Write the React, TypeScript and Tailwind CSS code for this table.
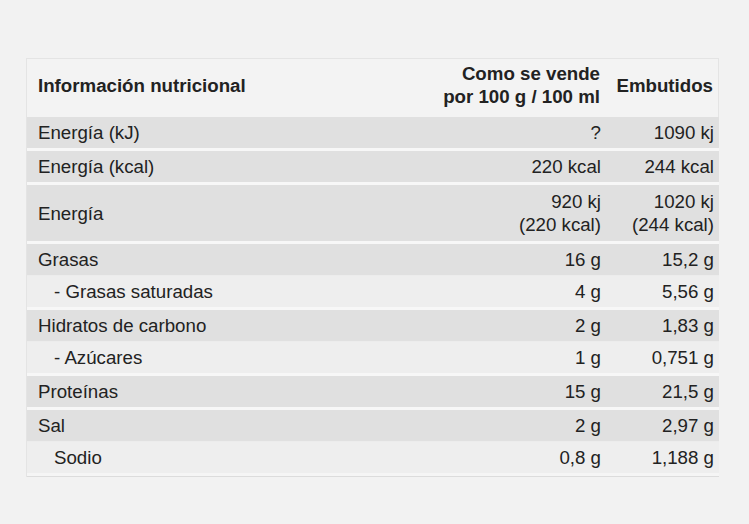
import React from "react";

type Row = { label: string; a: React.ReactNode; b: React.ReactNode; sub?: boolean; tall?: boolean; sepAfter?: boolean };

const rows: Row[] = [
  { label: "Energía (kJ)", a: "?", b: "1090 kj", sepAfter: true },
  { label: "Energía (kcal)", a: "220 kcal", b: "244 kcal", sepAfter: true },
  {
    label: "Energía",
    a: (
      <>
        920 kj
        <br />
        (220 kcal)
      </>
    ),
    b: (
      <>
        1020 kj
        <br />
        (244 kcal)
      </>
    ),
    tall: true,
    sepAfter: true,
  },
  { label: "Grasas", a: "16 g", b: "15,2 g" },
  { label: "- Grasas saturadas", a: "4 g", b: "5,56 g", sub: true, sepAfter: true },
  { label: "Hidratos de carbono", a: "2 g", b: "1,83 g" },
  { label: "- Azúcares", a: "1 g", b: "0,751 g", sub: true, sepAfter: true },
  { label: "Proteínas", a: "15 g", b: "21,5 g", sepAfter: true },
  { label: "Sal", a: "2 g", b: "2,97 g" },
  { label: "Sodio", a: "0,8 g", b: "1,188 g", sub: true },
];

export default function App() {
  return (
    <div
      className="w-[749px] h-[524px] bg-[#f2f2f2] pt-[58px] pl-[26px] text-[18.7px] leading-[23px] text-[#222]"
      style={{ fontFamily: '"Liberation Sans", Arial, sans-serif' }}
    >
      <div className="w-[693px] border-l border-[#e4e4e4]">
        <div className="flex items-center h-[59px] pb-[6px] bg-[#f3f3f3] border-t border-r border-[#e4e4e4] font-bold">
          <div className="flex-1 pl-[11px]">Información nutricional</div>
          <div className="w-[170px] pr-[5px] text-right">
            Como se vende
            <br />
            por 100 g / 100 ml
          </div>
          <div className="w-[113px] pr-[5px] text-right">Embutidos</div>
        </div>
        {rows.map((r, i) => (
          <div
            key={i}
            className={
              (r.sepAfter ? "border-b-[3px] border-[#f7f7f7] " : "") +
              (r.sub ? "bg-[#eeeeee] border-t border-t-[#ececec] " : "bg-[#e0e0e0] ") +
              "flex items-center"
            }
            style={
              r.sepAfter
                ? { height: r.tall ? 59 : r.sub ? 35 : 34 }
                : { height: r.sub ? 32 : 31 }
            }
          >
            <div className={"flex-1 " + (r.sub ? "pl-[27px]" : "pl-[11px]")}>{r.label}</div>
            <div className="w-[170px] pr-[5px] text-right">{r.a}</div>
            <div className="w-[113px] pr-[5px] text-right">{r.b}</div>
          </div>
        ))}
        <div className="h-[4px] bg-[#f5f5f5] border-b border-[#dcdcdc]" />
      </div>
    </div>
  );
}
